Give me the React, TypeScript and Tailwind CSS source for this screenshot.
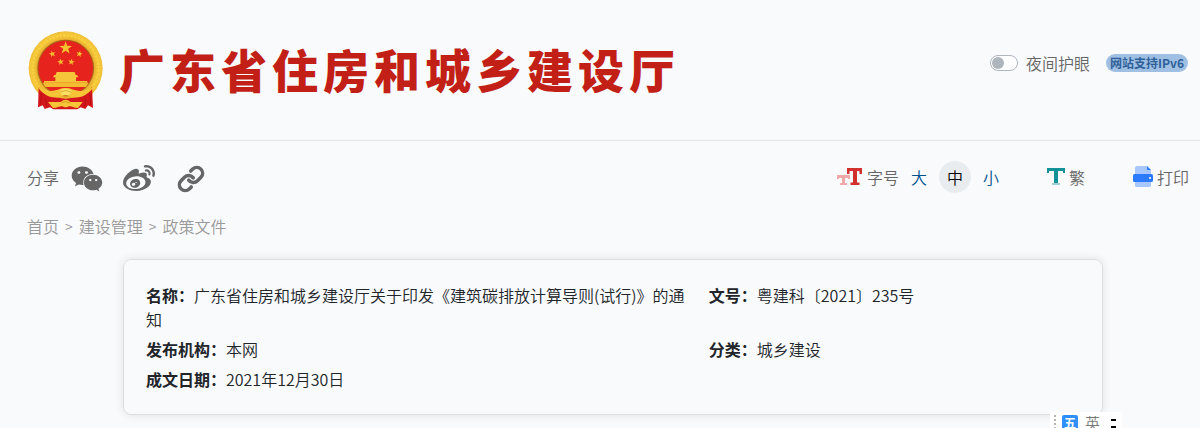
import { useState } from 'react';
import { Link } from 'lucide-react';
import { FaWeibo, FaWeixin } from 'react-icons/fa';

const sizes = ['大', '中', '小'];

const crumbs = ['首页', '建设管理', '政策文件'];

const details = [
  {
    name: '名称：',
    value: '广东省住房和城乡建设厅关于印发《建筑碳排放计算导则(试行)》的通知',
  },
  { name: '文号：', value: '粤建科〔2021〕235号' },
  { name: '发布机构：', value: '本网' },
  { name: '分类：', value: '城乡建设' },
  { name: '成文日期：', value: '2021年12月30日' },
];

const STAR =
  'M0 -20 L4.7 -6.5 L19 -6.2 L7.6 2.5 L11.8 16.2 L0 8 L-11.8 16.2 L-7.6 2.5 L-19 -6.2 L-4.7 -6.5 Z';

function Emblem() {
  return (
    <svg className="w-[75px] h-20 shrink-0" viewBox="40 30 225 240" aria-hidden="true">
      <defs>
        <radialGradient id="gold" gradientUnits="userSpaceOnUse" cx="153" cy="145" r="112">
          <stop offset="0.74" stopColor="#e0a52a" />
          <stop offset="0.88" stopColor="#fbd23f" />
          <stop offset="1" stopColor="#ecba34" />
        </radialGradient>
      </defs>
      {/* Wheat ring */}
      <circle cx="153" cy="145" r="111" fill="url(#gold)" />
      <circle
        cx="153"
        cy="145"
        r="98"
        fill="none"
        stroke="#dba42c"
        strokeWidth="10"
        strokeDasharray="2 9"
        opacity="0.4"
      />
      <circle cx="153" cy="144" r="85" fill="#a8621a" />
      <circle cx="153" cy="144" r="82" fill="#e6231c" />
      {/* Stars */}
      <g fill="#f5c030">
        <path d={STAR} transform="translate(153 84)" />
        <path d={STAR} transform="translate(113 102) rotate(-15) scale(.52)" />
        <path d={STAR} transform="translate(194 102) rotate(15) scale(.52)" />
        <path d={STAR} transform="translate(138 126) rotate(-10) scale(.52)" />
        <path d={STAR} transform="translate(170 126) rotate(10) scale(.52)" />
      </g>
      {/* Gate tower */}
      <path
        fill="#f6c63a"
        d="M126 156h54l3 9h-60zM119 165h68l4 7h-76zM122 172h62v11h-62zM88 183h130v5h-130z"
      />
      <path fill="#f2bb30" d="M84 188h138l-8 13H92z" />
      {/* Ribbon */}
      <path
        fill="#d3161b"
        d="M72 200 L70 262 L84 256 L90 267 L106 262 L116 268 H188 L198 262 L212 267 L220 256 L235 264 L232 200 C214 222 186 234 153 236 C119 234 91 220 72 200 Z"
      />
      <path
        fill="#f5c437"
        d="M66 196 C90 218 118 214 134 208 C142 203 164 203 172 208 C188 214 214 218 240 196 C224 224 196 238 172 231 L153 224 L134 231 C110 238 82 224 66 196 Z"
      />
      <path fill="#fbdd62" d="M134 213 C142 204 164 204 172 213 L164 226 H142 Z" />
      <path fill="none" stroke="#c78b1b" strokeWidth="2" d="M136 216 Q153 207 170 216" />
      <path
        fill="#f5c437"
        d="M100 246 H138 Q153 232 168 246 H204 L190 264 C174 264 168 256 160 260 Q153 264 146 260 C138 256 130 264 115 264 Z"
      />
      <path fill="none" stroke="#c78b1b" strokeWidth="2" d="M140 249 Q153 240 166 249" />
      <path
        fill="none"
        stroke="#a50d14"
        strokeWidth="2"
        d="M80 222 L78 254 M92 234 L96 258 M226 222 L228 254 M213 234 L210 258"
      />
    </svg>
  );
}

function FontSizeIcon() {
  return (
    <svg className="w-[26px] h-[18px]" viewBox="0 0 26 18" aria-hidden="true">
      <path fill="#efa9a9" d="M0 7h13v4h-2v-1H8v5h2v2H3v-2h2v-5H2v1H0z" />
      <path fill="#d0312f" d="M10 0h15v6h-2.500V3H20v11.500h2.500V17h-9v-2.500H16V3h-3.500v3H10z" />
    </svg>
  );
}

function TraditionalIcon() {
  return (
    <svg className="w-[18px] h-[18px]" viewBox="0 0 18 18" aria-hidden="true">
      <path fill="#14929a" d="M0 0h18v5h-2V3h-5v12H7V3H2v2H0z" />
      <path fill="#9fd0d2" d="M5 15h8v2H5z" />
    </svg>
  );
}

function PrintIcon() {
  return (
    <svg className="w-5 h-[22px]" viewBox="0 0 20 22" aria-hidden="true">
      <path fill="#a9c7ff" d="M4 0h10l4 4v5H2V2a2 2 0 0 1 2-2z" />
      <path fill="#2f7bff" d="M14 0l4 4h-4z" />
      <rect x="2" y="14" width="16" height="7" rx="1.5" fill="#a9c7ff" />
      <rect y="8" width="20" height="8" rx="1.5" fill="#2b7afb" />
      <circle cx="17" cy="12" r="1" fill="#fff" />
    </svg>
  );
}

function Header() {
  const [night, setNight] = useState(false);

  return (
    <header className="flex items-center justify-between h-[141px] pl-7 pr-3 border-b border-[#e4e6e9]">
      <div className="flex items-center gap-4">
        <Emblem />
        <h1 className="pb-1 text-[46px] leading-none font-black tracking-[5px] text-[#c21f17]">
          广东省住房和城乡建设厅
        </h1>
      </div>
      <div className="flex items-center gap-4 pb-[14px]">
        <label className="flex items-center gap-2 text-base text-[#666]">
          <input
            type="checkbox"
            role="switch"
            checked={night}
            onChange={(e) => setNight(e.target.checked)}
            className="appearance-none w-7 h-4 rounded-full border border-[#adb5bd] bg-white p-px before:block before:size-3 before:rounded-full before:bg-[#adb5bd] checked:before:ml-3"
          />
          夜间护眼
        </label>
        <a
          href="#ipv6"
          className="rounded-full bg-[#9fbfe3] px-1 text-xs leading-[18px] font-bold text-[#2f6199]"
        >
          网站支持IPv6
        </a>
      </div>
    </header>
  );
}

function Toolbar() {
  const [size, setSize] = useState('中');

  return (
    <div className="flex items-center justify-between h-8 pr-[10px] text-[#666]">
      <div className="flex items-center">
        <span className="mr-3">分享</span>
        <div className="flex items-center gap-5 pt-1">
          <a href="#weixin" aria-label="微信">
            <FaWeixin className="size-8" />
          </a>
          <a href="#weibo" aria-label="微博">
            <FaWeibo className="size-8" />
          </a>
          <a href="#link" aria-label="复制链接" className="flex w-8 justify-center">
            <Link className="size-7" strokeWidth={3} />
          </a>
        </div>
      </div>

      <div className="flex items-center gap-12">
        <div className="flex items-center gap-1">
          <FontSizeIcon />
          <span>字号</span>
          <div className="flex items-center gap-1 ml-1">
            {sizes.map((s) => (
              <button
                key={s}
                type="button"
                onClick={() => setSize(s)}
                className={
                  s === size
                    ? 'size-8 mx-1 rounded-full bg-[#e9ecef] text-black'
                    : 'w-6 h-8 text-[#00528f]'
                }
              >
                {s}
              </button>
            ))}
          </div>
        </div>
        <button type="button" className="flex items-center gap-1 -ml-1">
          <TraditionalIcon />
          繁
        </button>
        <button type="button" className="flex items-center gap-1">
          <PrintIcon />
          打印
        </button>
      </div>
    </div>
  );
}

function InputMethodBar() {
  return (
    <div className="fixed bottom-0 right-[78px] flex items-start w-[72px] h-4 pl-1 pt-[3px] overflow-hidden bg-white">
      <svg className="w-2 h-4 shrink-0" viewBox="0 0 8 16" aria-hidden="true">
        <path stroke="#b5b5b5" strokeWidth="2" strokeDasharray="2 2" d="M1 0v16" />
      </svg>
      <span className="shrink-0 size-4 rounded-xs bg-[#2f8ffb] text-center text-xs leading-4 font-bold text-white">
        五
      </span>
      <span className="shrink-0 ml-[7px] text-[15px] leading-4 text-[#777]">英</span>
      <svg className="ml-auto mr-[6px] mt-1 w-[5px] h-3 shrink-0" viewBox="0 0 5 12" aria-hidden="true">
        <path fill="#000" d="M0 0h5v2H0zM0 7h5v2H4v3H1V9H0z" />
      </svg>
    </div>
  );
}

export default function App() {
  return (
    <div className="min-h-screen overflow-hidden bg-[#f9fafc] font-['Noto_Sans_CJK_SC',sans-serif] font-[350] text-base text-[#212529]">
      <Header />

      <main className="pl-[27px] pr-px pt-5">
        <Toolbar />

        {/* Breadcrumb */}
        <nav className="flex items-center gap-[6px] mt-[21px] text-[#999]">
          {crumbs.map((crumb, i) => (
            <span key={crumb} className="flex items-center gap-[6px]">
              {i > 0 && <span className="text-sm">&gt;</span>}
              <a href="#crumb">{crumb}</a>
            </span>
          ))}
        </nav>

        {/* Document details */}
        <dl className="grid grid-cols-[3fr_2fr] gap-y-[6px] max-w-[980px] mx-auto mt-[21px] mb-3 pl-[22px] pr-[18px] py-[23px] rounded-lg border border-[#dcdee0] shadow-[0_0_10px_rgba(0,0,0,0.1)]">
          {details.map(({ name, value }) => (
            <div key={name} className="pr-4">
              <dt className="inline font-bold">{name}</dt>
              <dd className="inline">{value}</dd>
            </div>
          ))}
        </dl>
      </main>

      <InputMethodBar />
    </div>
  );
}
